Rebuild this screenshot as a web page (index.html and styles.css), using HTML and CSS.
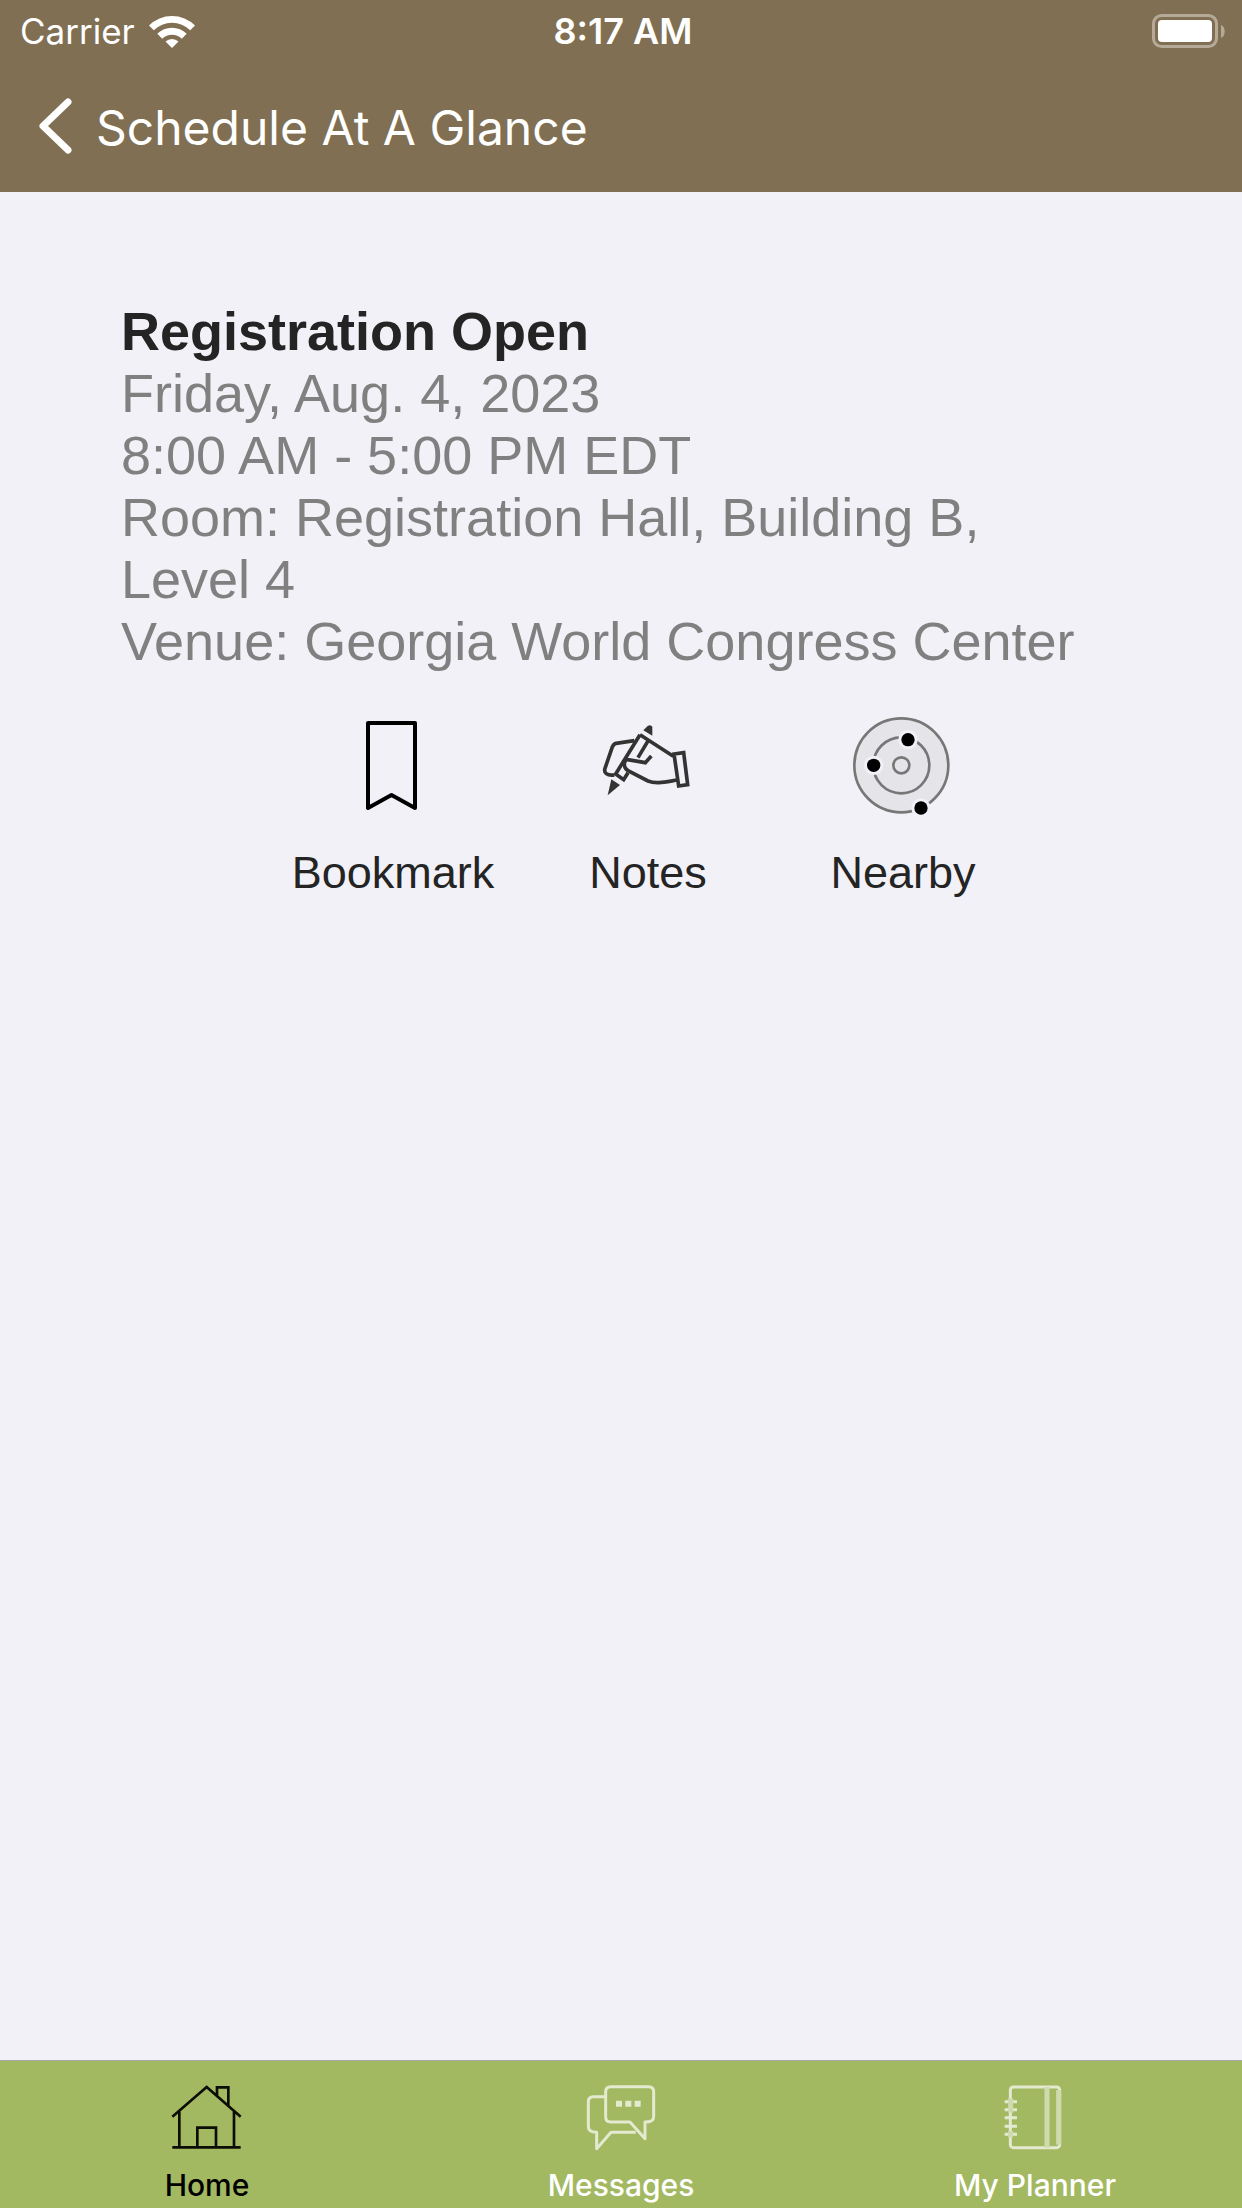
FILE: index.html
```html
<!DOCTYPE html>
<html lang="en">
  <head>
    <meta charset="UTF-8" />
    <meta name="viewport" content="width=device-width, initial-scale=1.0" />
    <title>Schedule At A Glance</title>
    <link rel="stylesheet" href="styles.css">
  </head>
  <body>
    <header class="header">
      <!-- Status bar -->
      <div class="status-bar">
        <div class="carrier">
          <span>Carrier</span>
          <svg class="wifi" viewBox="0 0 46 34" aria-hidden="true">
            <path d="M0 11.500a32.500 32.500 0 0 1 46 0l-4.800 4.800a25.700 25.700 0 0 0-36.400 0z" />
            <path d="M8.300 19.800a20.800 20.800 0 0 1 29.400 0l-4.900 4.900a13.900 13.900 0 0 0-19.600 0z" />
            <path d="M16.500 27.500a9.500 9.500 0 0 1 13 0L23 34z" />
          </svg>
        </div>
        <div class="time">8:17 AM</div>
        <svg class="battery" viewBox="0 0 74 34" role="img" aria-label="Battery full">
          <rect class="battery-case" x="1.500" y="1.500" width="63" height="31" rx="8" />
          <rect x="6" y="6" width="54" height="22" rx="4" />
          <path class="battery-tip" d="M69 11c5 2 5 11 0 13z" />
        </svg>
      </div>

      <!-- Navigation -->
      <div class="navbar">
        <button class="back" type="button" aria-label="Back">
          <svg viewBox="0 0 48 64" aria-hidden="true"><path d="M35 7L10 31L35 55" /></svg>
        </button>
        <h1 class="title">Schedule At A Glance</h1>
      </div>
    </header>

    <main class="content">
      <section class="details">
        <h2>Registration Open</h2>
        <p>Friday, Aug. 4, 2023</p>
        <p>8:00 AM - 5:00 PM EDT</p>
        <p>Room: Registration Hall, Building B, Level 4</p>
        <p>Venue: Georgia World Congress Center</p>
      </section>

      <div class="actions">
        <button type="button">
          <svg class="bookmark-icon" viewBox="0 0 96 96" aria-hidden="true">
            <path d="M23 6H70V91L46.500 78L23 91Z" />
          </svg>
          <span>Bookmark</span>
        </button>
        <button type="button">
          <svg class="notes-icon" viewBox="30 21 288 288" aria-hidden="true">
            <path d="M133 92L78 100C72 101 69 106 67 111L45 175C41 188 50 198 73 195" />
            <path d="M150 74L250 139M150 74L77 192L101 209L114 188M175 91L144 143M108 148L166 158L184 138" />
            <path d="M108 148C101 160 101 174 114 182L174 213C198 223 225 216 263 210" />
            <path d="M252 132L281 128L293 224L266 228Z" />
            <path class="solid" d="M160 61L173 48Q181 42 187 50L187 77Z" />
            <path class="solid" d="M64 208L90 225L53 256Z" />
          </svg>
          <span>Notes</span>
        </button>
        <button type="button">
          <svg class="nearby-icon" viewBox="45 36 288 288" aria-hidden="true">
            <circle class="area" cx="184" cy="181" r="141" />
            <circle cx="184" cy="181" r="84" />
            <circle cx="184" cy="181" r="24" />
            <circle class="halo" cx="204" cy="104" r="29" />
            <circle class="halo" cx="101" cy="181" r="29" />
            <circle class="halo" cx="243" cy="309" r="29" />
            <circle class="dot" cx="204" cy="104" r="20" />
            <circle class="dot" cx="101" cy="181" r="20" />
            <circle class="dot" cx="243" cy="309" r="20" />
          </svg>
          <span>Nearby</span>
        </button>
      </div>
    </main>

    <!-- Tabs -->
    <nav class="tabs">
      <a class="active" href="#home">
        <svg class="home-icon" viewBox="63 99 216 216" aria-hidden="true">
          <path d="M67 200L170 111L272 200M88 184V292M252 184V292M67 292H272M142 292V233H198V292M201 136V112H235V166" />
        </svg>
        <span>Home</span>
      </a>
      <a href="#messages">
        <svg class="messages-icon" viewBox="165 99 216 216" aria-hidden="true">
          <path d="M242 110H356Q371 110 371 125V200Q371 216 345 216V266L300 216H242Q227 216 227 201V125Q227 110 242 110Z" />
          <path d="M225 140H190Q175 140 175 155V230Q175 246 200 247V296L243 247H317" />
          <path class="solid" d="M258 152h18v18h-18zM286 152h18v18h-18zM314 152h18v18h-18z" />
        </svg>
        <span>Messages</span>
      </a>
      <a href="#planner">
        <svg class="planner-icon" viewBox="177 99 216 216" aria-hidden="true">
          <rect x="211" y="111" width="148" height="182" rx="9" />
          <path class="band" d="M321 111V293M356 120V284" />
          <path d="M194 155H231M194 179H231M194 203H231M194 229H231M194 253H231" />
          <path class="band" d="M212 145V188M212 243V262" />
        </svg>
        <span>My Planner</span>
      </a>
    </nav>
  </body>
</html>
```
FILE: styles.css
```css
* {
  box-sizing: border-box;
}

body {
  margin: 0;
  min-height: 100vh;
  display: flex;
  flex-direction: column;
  background-color: #f2f1f7;
  font-family: "Liberation Sans", Arial, sans-serif;
}

h1,
h2,
p {
  margin: 0;
}

svg {
  display: block;
  fill: none;
  overflow: visible;
}

button {
  padding: 0;
  border: none;
  background: none;
  color: inherit;
  font: inherit;
  cursor: pointer;
}

.header {
  background-color: #806f52;
  color: white;
  font-family: Inter, sans-serif;
}

.status-bar {
  display: grid;
  grid-template-columns: 1fr auto 1fr;
  align-items: center;
  height: 62px;
  padding: 0 16px 0 20px;
  font-size: 35px;
}

.carrier {
  display: flex;
  align-items: center;
  gap: 14px;
}

.wifi {
  width: 46px;
  height: 34px;
  fill: white;
}

.time {
  font-size: 36px;
  font-weight: 600;
}

.battery {
  width: 74px;
  height: 34px;
  justify-self: end;
  fill: white;
}

.battery-case {
  fill: none;
  stroke: #b5a998;
  stroke-width: 3;
}

.battery-tip {
  fill: #b5a998;
}

.navbar {
  display: flex;
  align-items: center;
  gap: 15px;
  height: 130px;
  padding: 0 33px;
}

.back svg {
  width: 48px;
  height: 64px;
  stroke: white;
  stroke-width: 7;
  stroke-linecap: round;
  stroke-linejoin: round;
}

.title {
  font-size: 48px;
  font-weight: 400;
}

.content {
  flex: 1;
  padding: 108px 67px 60px 121px;
}

.details {
  padding-right: 80px;
  color: #808080;
  font-size: 54px;
  line-height: 62px;
}

.details h2 {
  color: #242424;
  font-size: 54px;
}

.actions {
  display: grid;
  grid-template-columns: repeat(3, 255px);
  justify-content: center;
  margin-top: 45px;
  color: #242424;
  font-size: 45px;
  line-height: 62px;
}

.actions button {
  display: flex;
  flex-direction: column;
  align-items: center;
  gap: 29px;
}

.actions svg {
  width: 96px;
  height: 96px;
}

.bookmark-icon {
  stroke: black;
  stroke-width: 4;
  stroke-linejoin: round;
}

.notes-icon {
  stroke: #333;
  stroke-width: 11;
}

.notes-icon .solid {
  fill: #333;
  stroke: none;
}

.nearby-icon {
  stroke: #777;
  stroke-width: 8;
}

.nearby-icon .area {
  fill: #e5e4e9;
}

.nearby-icon .halo {
  fill: #f2f1f7;
  stroke: none;
}

.nearby-icon .dot {
  fill: black;
  stroke: none;
}

.tabs {
  display: grid;
  grid-template-columns: repeat(3, 1fr);
  border-top: 1px solid #a9a9a9;
  background-color: #a2b861;
  font-family: Inter, sans-serif;
  font-size: 30px;
  font-weight: 500;
  line-height: 36px;
}

.tabs a {
  display: flex;
  flex-direction: column;
  align-items: center;
  gap: 12px;
  padding: 22px 0 5px;
  color: white;
  text-decoration: none;
}

.tabs a.active {
  color: black;
}

.tabs svg {
  width: 72px;
  height: 72px;
}

.home-icon {
  stroke: #0c0e06;
  stroke-width: 8;
}

.messages-icon,
.planner-icon {
  stroke: #e3ead0;
  stroke-width: 9;
  stroke-linejoin: round;
}

.messages-icon .solid {
  fill: #e3ead0;
  stroke: none;
}

.planner-icon .band {
  stroke: #cfdaae;
  stroke-width: 15;
}
```
